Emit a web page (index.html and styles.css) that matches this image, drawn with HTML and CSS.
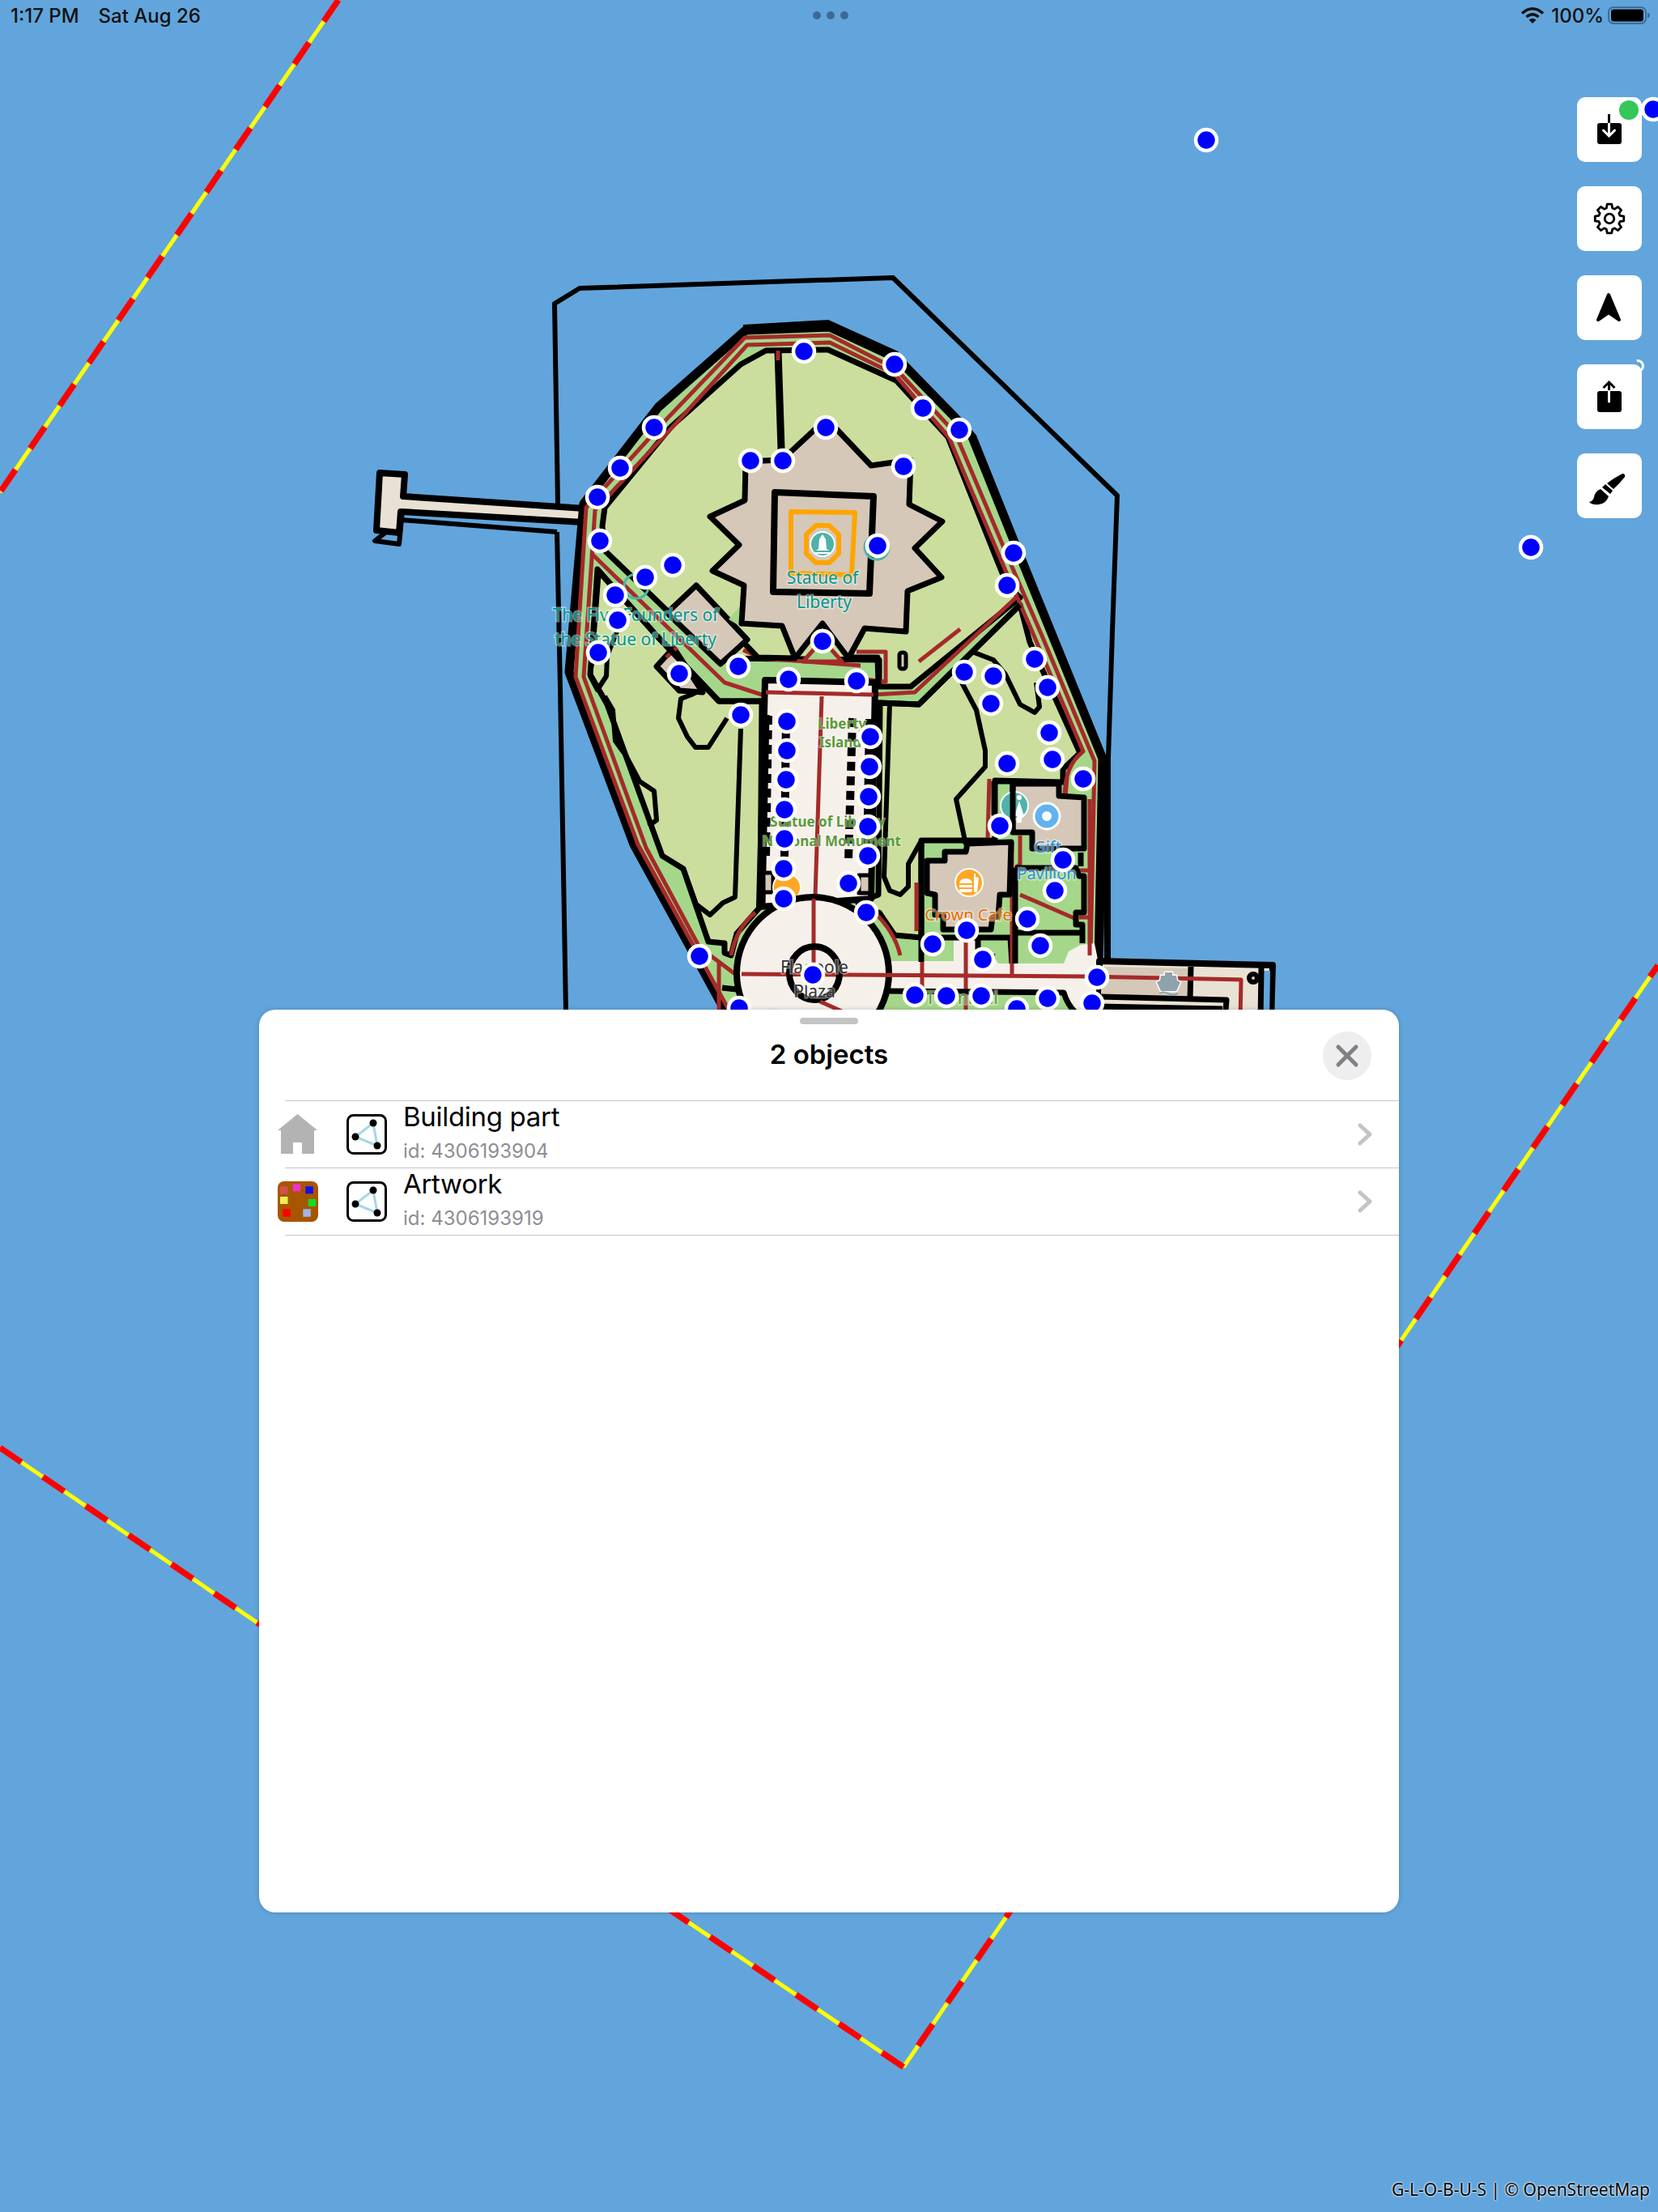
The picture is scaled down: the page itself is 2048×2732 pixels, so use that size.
FILE: index.html
```html
<!DOCTYPE html>
<html lang="en">
<head>
<meta charset="utf-8">
<title>Go Map</title>
<link rel="stylesheet" href="styles.css">
</head>
<body>
<main class="screen">
  <svg class="map" viewBox="0 0 2048 2732" xmlns="http://www.w3.org/2000/svg" aria-label="Map of Liberty Island">
    <!-- boundary lines -->
    <g>
      <path class="bnd-y" d="M0 608L418 0"/><path class="bnd-r" d="M418 0L0 608"/>
      <path class="bnd-y" d="M2048 1192L1116 2553"/>
      <path class="bnd-r bnd-off" d="M1116 2553L2048 1192"/>
      <path class="bnd-y" d="M1116 2553L700 2273"/>
      <path class="bnd-r" d="M1116 2553L700 2273"/>
      <path class="bnd-y" d="M0 1788L400 2060"/>
      <path class="bnd-r" d="M0 1788L400 2060"/>
    </g>
    <!-- fence -->
    <path class="fence" d="M689 622L685 375L716 356L1103 343L1380 612L1374 780L1369 936L1369 1186"/>
    <path class="fence" d="M688 657L692 850L699 1250"/>
    <path class="fence" d="M495 642L688 657"/>
    <path class="fence-thin" d="M918 403L1023 397L1109 436"/>
    <path class="fence-thin" d="M1363 945L1366 1186"/>
    <!-- west pier -->
    <path class="fence" d="M495 643L463 668L493 672L498 620"/>
    <path class="pier" d="M469 584L500 586L498 613L722 628L720 645L495 632L493 658L465 655Z"/>
    <!-- island base -->
    <path class="island" d="M921 408L1025 404L1109 443L1181 517L1201 540L1252 667L1298 780L1362 937L1357 1190L1357 1300L925 1300L895 1247L783 1043L703 830L721 622L813 503Z"/>
    <!-- lawns -->
    <path class="lawn" d="M946 433L1023 432L1107 470L1171 540L1232 693L1245 725L1260 738L1125 848L1086 848L1086 815L885 813L747 680L744 650L747 627L829 527L915 450Z"/>
    <path class="lawn" d="M1260 747L1272 793L1334 930L1313 950L1313 966L1229 964L1229 1038L1138 1038L1138 1158L1105 1155L1086 1127L1070 1127L1060 1115L1085 1105L1087 868L1135 870Z"/>
    <path class="lawn" d="M738 703L811 785L888 866L941 866L939 1120L910 1153L903 1180L895 1177L895 1165L875 1163L844 1073L818 1057L750 870L729 833L731 807Z"/>
    <!-- lawn paths -->
    <path class="path" d="M1099 868L1092 1083L1099 1100L1112 1105L1122 1095L1122 1067L1137 1040"/>
    <path class="path" d="M1188 843L1206 877L1217 927L1217 947L1181 987L1193 1043"/>
    <path class="path" d="M1201 805L1227 815L1242 833L1260 870L1278 880L1284 873L1280 843"/>
    <path class="path" d="M747 860L757 877L760 915L773 933L790 965L808 977L811 1013L801 1020"/>
    <path class="path" d="M818 1057L844 1073L860 1117L877 1130L893 1115L908 1108L915 900"/>
    <path class="path" d="M870 850L854 858L841 863L838 887L849 910L859 923L875 923L898 887"/>
    <path class="path" d="M740 703L732 807L729 835L738 852L749 835L750 810L770 760"/>
    <path class="path-wide" d="M961 433L965 555"/>
    <path class="road" d="M961 433L961 445"/>
    <path class="road" d="M1186 777L1135 817"/>
    <!-- roads in the ring -->
    <path class="road" d="M900 1247L788 1043L711 836L724 627L824 517L920 417L1025 414L1107 456L1180 535L1250 700L1287 785L1352 940L1347 1180"/>
    <path class="road" d="M864 1170L798 1047L721 836L735 630L833 525L923 426L1025 423L1105 462L1172 540L1240 700L1275 780L1338 928Q1315 945 1315 985"/>
    <path class="road" d="M730 683L895 843L941 858L1079 858L1130 855L1255 738"/>
    <path class="road" d="M864 1170L908 1203M888 1187L888 1250"/>
    <path class="road" d="M918 803L941 813L1063 822M1058 805L1094 805L1094 842L1060 838"/>
    <path class="road" d="M1333 1075L1346 1075M1333 1133L1346 1133"/>
    <!-- diamond -->
    <path class="bldg" d="M860 723L923 790L890 820L824 757Z"/>
    <path class="bldg" d="M811 823L832 800L868 855L839 853Z"/>
    <path class="road" d="M823 812L836 800"/>
    <!-- upper black edges of the band -->
    <path class="edge" d="M737 703L811 785L888 866L941 866"/>
    <path class="edge" d="M1084 868L1135 870L1260 747"/>
    <path class="edge" d="M918 793L936 812L982 813M1048 812L1084 812L1085 845"/>
    <rect class="pill" x="1111" y="806" width="8" height="20" rx="3"/>
    <path class="bandfill" d="M917 745L900 765L917 775Z"/>
    <path class="bandfill road-tri" d="M992 817L1016 790L1040 817Z"/>
    <!-- star -->
    <path class="bldg-w" d="M1021 517L1076 575L1125 568L1123 623L1164 644L1130 677L1163 713L1121 730L1119 780L1068 776L1048 813L1016 770L982 813L966 773L916 770L919 723L880 705L913 673L877 638L920 618L921 570L966 568Z"/>
    <path class="sq" d="M957 608L1079 613L1074 733L955 731Z"/>
    <path class="sq-o" d="M977 632L1056 633L1052 710L977 708Z"/>
    <path class="oct-o" d="M1008 649L1024 649L1036 660L1036 684L1024 695L1008 695L996 684L996 660Z"/>
    <circle class="poi-teal" cx="1016" cy="672" r="15"/>
    <path class="glyph-w" d="M1016 660L1020 666L1021 678L1024 680L1008 680L1011 678L1012 666ZM1007 682L1025 682L1025 684L1007 684Z"/>
    <circle class="poi-teal-ghost" cx="1083" cy="676" r="15"/>
    <circle class="poi-teal-ghost" cx="786" cy="724" r="15"/>
    <!-- avenue -->
    <path class="cream" d="M945 840L1081 843L1076 1110L938 1120Z"/>
    <path class="road" d="M946 855L1079 858M1015 860L1005 1168"/>
    <path class="thick" d="M946 883L941 1118"/>
    <path class="dots" d="M949 884L946 1060"/>
    <path class="dots" d="M971 885L969 1058"/>
    <path class="dots" d="M1053 887L1048 1062"/>
    <path class="dots" d="M1074 888L1071 1062"/>
    <rect class="tan-box" x="1061" y="1081" width="14" height="22"/>
    <rect class="tan-box" x="943" y="1078" width="12" height="24"/>
    <circle class="poi-orange" cx="972" cy="1096" r="17"/>
    <!-- east plaza -->
    <path class="red-wedge" d="M933 1127Q910 1145 903 1180M1078 1125Q1105 1150 1112 1180"/>
    <path class="cream-e" d="M1096 1187L1178 1187L1178 1160L1208 1160L1208 1172L1228 1182L1233 1190L1314 1190L1320 1175L1335 1167L1352 1165L1357 1190L1356 1250L1325 1250L1314 1226L1096 1223Z"/>
    <path class="edge" d="M1138 1158L1248 1158L1250 1190M1138 1040L1138 1188M1208 1160L1208 1172L1228 1182"/>
    <path class="road" d="M1139 1188L1139 1226M1193 1163L1193 1250M1250 1040L1250 1206M1222 962L1220 1035M1132 1090L1132 1150M1260 1032L1260 1067L1252 1075M1346 987L1346 1180M1318 960L1316 985"/>
    <path class="road" d="M1260 1105L1329 1135"/>
    <!-- gift and cafe -->
    <path class="bldg-w" d="M1251 968L1308 968L1308 983L1339 985L1339 1048L1275 1048L1275 1028L1251 1028Z"/>
    <path class="edge" d="M1228 965L1228 1007M1228 965L1251 965M1335 1053L1335 1070"/>
    <path class="lot" d="M1254 1072L1329 1072L1333 1082L1339 1082L1339 1127L1329 1127L1329 1142L1337 1142L1337 1165M1254 1072L1254 1190M1254 1152L1337 1152"/>
    <path class="bldg-w" d="M1195 1042L1249 1040L1247 1105L1235 1105L1233 1132L1226 1133L1224 1148L1165 1148L1165 1130L1155 1130L1155 1105L1145 1103L1145 1063L1167 1063L1167 1052L1193 1052Z"/>
    <circle class="poi-teal" cx="1253" cy="995" r="17"/>
    <circle class="poi-teal-dot" cx="1259" cy="985" r="3"/>
    <path class="glyph-w" d="M1259 989L1253 1008L1256 1008L1256 1016L1262 1016L1262 1008L1265 1008Z"/>
    <path class="edge" d="M1251 968L1251 1028"/>
    <circle class="poi-blue" cx="1293" cy="1008" r="16"/>
    <circle class="poi-dot" cx="1293" cy="1008" r="6"/>
    <circle class="poi-orange" cx="1197" cy="1090" r="17"/>
    <path class="glyph-w" d="M1185 1091Q1186 1085 1193 1085Q1200 1085 1201 1091ZM1185 1093L1201 1093L1201 1096L1185 1096ZM1185 1098L1201 1098Q1201 1102 1198 1102L1188 1102Q1185 1102 1185 1098ZM1203 1079L1205 1079L1205 1083L1209 1084L1207 1102L1203 1102Z"/>
    <!-- plaza -->
    <circle class="plaza" cx="1004" cy="1202" r="94"/>
    <path class="road" d="M916 1203L1340 1206M1005 1110L1005 1200"/>
    <ellipse class="ring" cx="1006" cy="1202" rx="31" ry="33"/>
    <path class="road" d="M1013 1237L1042 1250"/>
    <circle class="ghost" cx="954" cy="1256" r="12"/>
    <path class="edge" d="M892 1220L910 1222M1097 1224L1314 1226Q1318 1240 1328 1250"/>
    <!-- east pier -->
    <path class="pier-e" d="M1358 1187L1572 1192L1570 1260L1358 1260Z"/>
    <path class="pier-tan" d="M1360 1194L1470 1196L1470 1232L1360 1229Z"/>
    <path class="fill-water" d="M1358 1241L1510 1243L1510 1260L1358 1260ZM1560 1199L1569 1199L1568 1260L1558 1260Z"/>
    <path class="edge" d="M1471 1194L1470 1233M1558 1194L1557 1260M1358 1231L1515 1235L1513 1260M1358 1243L1510 1246"/>
    <path class="road" d="M1340 1206L1533 1210L1532 1260"/>
    <circle class="ring-s" cx="1548" cy="1208" r="5"/>
    <path class="ferry" d="M1439 1201L1448 1201L1448 1205L1453 1205L1454 1211L1458 1213L1453 1224L1434 1224L1429 1213L1433 1211L1434 1205L1439 1205Z"/>
    <path class="ferry-wave" d="M1432 1227Q1437 1224 1443 1227Q1449 1230 1455 1227"/>
    <!-- labels -->
    <g class="labels">
      <text class="lb lb-teal" x="1016" y="721">Statue of</text>
      <text class="lb lb-teal" x="1018" y="751">Liberty</text>
      <text class="lb lb-teal" x="785" y="767">The Five Founders of</text>
      <text class="lb lb-teal" x="785" y="797">the Statue of Liberty</text>
      <text class="lb lb-green" x="1040" y="900">Liberty</text>
      <text class="lb lb-green" x="1038" y="923">Island</text>
      <text class="lb lb-green" x="1022" y="1021">Statue of Liberty</text>
      <text class="lb lb-green" x="1027" y="1045">National Monument</text>
      <text class="lb lb-blue" x="1294" y="1053">Gift</text>
      <text class="lb lb-blue" x="1293" y="1086">Pavilion</text>
      <text class="lb lb-orange" x="1196" y="1137">Crown Cafe</text>
      <text class="lb lb-dark" x="1006" y="1202">Flagpole</text>
      <text class="lb lb-dark" x="1006" y="1232">Plaza</text>
      <text class="lb lb-term" x="1188" y="1240">Terminal</text>
    </g>
    <!-- nodes -->
    <g class="nodes">
      <circle cx="993" cy="434"/><circle cx="1105" cy="450"/><circle cx="1140" cy="504"/><circle cx="1185" cy="531"/>
      <circle cx="808" cy="528"/><circle cx="766" cy="578"/><circle cx="738" cy="614"/><circle cx="1020" cy="528"/>
      <circle cx="927" cy="569"/><circle cx="967" cy="569"/><circle cx="1116" cy="576"/><circle cx="741" cy="668"/>
      <circle cx="831" cy="698"/><circle cx="797" cy="713"/><circle cx="760" cy="735"/><circle cx="763" cy="766"/>
      <circle cx="739" cy="806"/><circle cx="1084" cy="674"/><circle cx="1252" cy="683"/><circle cx="1244" cy="723"/>
      <circle cx="1016" cy="792"/><circle cx="912" cy="823"/><circle cx="839" cy="832"/><circle cx="974" cy="839"/>
      <circle cx="1058" cy="841"/><circle cx="1191" cy="830"/><circle cx="1227" cy="835"/><circle cx="1224" cy="869"/>
      <circle cx="1278" cy="814"/><circle cx="1294" cy="849"/><circle cx="915" cy="883"/><circle cx="972" cy="891"/>
      <circle cx="1075" cy="910"/><circle cx="972" cy="927"/><circle cx="1074" cy="947"/><circle cx="971" cy="963"/>
      <circle cx="1073" cy="984"/><circle cx="969" cy="1000"/><circle cx="1072" cy="1021"/><circle cx="969" cy="1036"/>
      <circle cx="1072" cy="1057"/><circle cx="968" cy="1073"/><circle cx="1048" cy="1091"/><circle cx="968" cy="1110"/>
      <circle cx="1070" cy="1127"/><circle cx="1296" cy="905"/><circle cx="1300" cy="938"/><circle cx="1244" cy="943"/>
      <circle cx="1338" cy="962"/><circle cx="1235" cy="1020"/><circle cx="1313" cy="1062"/><circle cx="1303" cy="1100"/>
      <circle cx="1269" cy="1135"/><circle cx="1285" cy="1168"/><circle cx="1194" cy="1149"/><circle cx="1152" cy="1166"/>
      <circle cx="1214" cy="1185"/><circle cx="864" cy="1181"/><circle cx="1004" cy="1204"/><circle cx="1355" cy="1207"/>
      <circle cx="1130" cy="1229"/><circle cx="1169" cy="1230"/><circle cx="1212" cy="1230"/><circle cx="1294" cy="1233"/>
      <circle cx="1349" cy="1239"/><circle cx="913" cy="1245"/><circle cx="1256" cy="1246"/>
      <circle cx="1490" cy="173"/><circle cx="1891" cy="676"/><circle cx="2042" cy="135"/>
    </g>
  </svg>

  <header class="status">
    <div class="status-left"><span>1:17 PM</span><span>Sat Aug 26</span></div>
    <div class="status-dots"><i></i><i></i><i></i></div>
    <div class="status-right">
      <svg class="wifi" viewBox="0 0 30 22"><path d="M2 8.5Q15 -3 28 8.5" class="wifi-arc"/><path d="M7.5 13Q15 6.5 22.5 13" class="wifi-arc"/><path d="M15 21L10.5 16.5Q15 13 19.5 16.5Z" class="wifi-dot"/></svg>
      <span>100%</span>
      <svg class="battery" viewBox="0 0 52 22"><rect class="bat-shell" x="1" y="1" width="46" height="20" rx="6"/><rect class="bat-fill" x="4" y="3.5" width="40" height="15" rx="3.5"/><path class="bat-nub" d="M49 7.5Q52 8.5 52 11Q52 13.5 49 14.5Z"/></svg>
    </div>
  </header>

  <nav class="tools">
    <button class="tool">
      <svg viewBox="0 0 80 80"><rect class="ic-fill" x="25" y="32" width="30" height="26" rx="3"/><path class="ic-line" d="M39.5 21L39.5 33"/><path class="ic-inv" d="M39.5 33L39.5 47M32.5 41L39.5 48L46.5 41"/></svg>
      <span class="badge-green"></span>
    </button>
    <button class="tool">
      <svg viewBox="0 0 80 80"><g transform="translate(40 40)"><path class="ic-gear" d="M-3.72-12.98L-2.82-17.78L2.82-17.78L3.72-12.98L6.54-11.81L10.58-14.56L14.56-10.58L11.81-6.54L12.98-3.72L17.78-2.82L17.78 2.82L12.98 3.72L11.81 6.54L14.56 10.58L10.58 14.56L6.54 11.81L3.72 12.98L2.82 17.78L-2.82 17.78L-3.72 12.98L-6.54 11.81L-10.58 14.56L-14.56 10.58L-11.81 6.54L-12.98 3.72L-17.78 2.82L-17.78-2.82L-12.98-3.72L-11.81-6.54L-14.56-10.58L-10.58-14.56L-6.54-11.81Z"/><circle class="ic-gear" r="5.8"/></g></svg>
    </button>
    <button class="tool">
      <svg viewBox="0 0 80 80"><path class="ic-nav" d="M39 24L52 55L39 46L26 55Z"/></svg>
    </button>
    <button class="tool">
      <svg viewBox="0 0 80 80"><rect class="ic-fill" x="25" y="33" width="30" height="26" rx="3"/><path class="ic-line" d="M39.5 22L39.5 33M32.5 29L39.5 22L46.5 29"/><path class="ic-inv" d="M39.5 33L39.5 46"/></svg>
      <span class="badge-ring"></span>
    </button>
    <button class="tool">
      <svg viewBox="0 0 80 80"><path class="ic-solid" d="M56 25Q60 25 59 29Q52 38 45 44L37 37Q46 30 56 25Z"/><path class="ic-solid" d="M35 38L44 46L41 50L31 42Z"/><path class="ic-solid" d="M29 44L39 53Q36 62 27 63Q19 64 15 60Q20 59 21 54Q22 47 29 44Z"/></svg>
    </button>
  </nav>

  <section class="panel">
    <div class="grabber"></div>
    <div class="panel-head">
      <h1>2 objects</h1>
      <button class="close"><svg viewBox="0 0 60 60"><path d="M19 19L41 41M41 19L19 41"/></svg></button>
    </div>
    <div class="sep"></div>
    <div class="row">
      <svg class="ic-kind" viewBox="0 0 50 50"><path class="house" d="M24.500 0L49 20L45 20L45 49L30 49L30 35L19 35L19 49L4 49L4 20L0 20Z"/></svg>
      <svg class="ic-geom" viewBox="0 0 50 50"><rect class="geom-box" x="1.500" y="1.500" width="47" height="47" rx="7"/><path class="geom-line" d="M33 11L38 39L11 28Z"/><circle cx="33" cy="11" r="4.500"/><circle cx="38" cy="39" r="4.500"/><circle cx="11" cy="28" r="4.500"/></svg>
      <div class="row-text"><div class="row-title">Building part</div><div class="row-id">id: 4306193904</div></div>
      <svg class="chev" viewBox="0 0 18 28"><path d="M3 3L15 14L3 25"/></svg>
    </div>
    <div class="sep"></div>
    <div class="row">
      <svg class="ic-kind" viewBox="0 0 50 50"><rect class="art-bg" width="50" height="50" rx="8"/><rect class="a1" x="3" y="6.300" width="9.500" height="9.500"/><rect class="a2" x="18.700" y="3.300" width="9.500" height="9"/><rect class="a3" x="34.300" y="6.300" width="9.500" height="9"/><rect class="a4" x="3" y="19" width="9.500" height="9"/><rect class="a5" x="37.700" y="22" width="9.500" height="9"/><rect class="a6" x="6.300" y="34.300" width="9.500" height="9.500"/><rect class="a7" x="31.300" y="34.300" width="9.500" height="9.500"/></svg>
      <svg class="ic-geom" viewBox="0 0 50 50"><rect class="geom-box" x="1.500" y="1.500" width="47" height="47" rx="7"/><path class="geom-line" d="M33 11L38 39L11 28Z"/><circle cx="33" cy="11" r="4.500"/><circle cx="38" cy="39" r="4.500"/><circle cx="11" cy="28" r="4.500"/></svg>
      <div class="row-text"><div class="row-title">Artwork</div><div class="row-id">id: 4306193919</div></div>
      <svg class="chev" viewBox="0 0 18 28"><path d="M3 3L15 14L3 25"/></svg>
    </div>
    <div class="sep"></div>
  </section>

  <div class="attrib">G-L-O-B-U-S | © OpenStreetMap</div>
</main>
</body>
</html>
```
FILE: styles.css
```css
* { box-sizing: border-box; }
html, body { margin: 0; padding: 0; }
.screen { position: relative; width: 2048px; height: 2732px; overflow: hidden; background: #62a5dc; font-family: Inter, "Liberation Sans", sans-serif; }
.map { position: absolute; inset: 0; width: 2048px; height: 2732px; display: block; }

/* map strokes */
.map path, .map rect, .map circle, .map ellipse { stroke-linejoin: round; }
.bnd-y { fill: none; stroke: #ffff00; stroke-width: 5; }
.bnd-r { fill: none; stroke: #ff0000; stroke-width: 7.500; stroke-dasharray: 32 32; }
.bnd-off { stroke-dashoffset: 32; }
.fence { fill: none; stroke: #000; stroke-width: 6; }
.fence-thin { fill: none; stroke: #000; stroke-width: 4; }
.pier { fill: #e9e2d4; stroke: #000; stroke-width: 8; }
.island { fill: #a5d78a; stroke: #000; stroke-width: 11; }
.lawn { fill: #cbde9e; stroke: #000; stroke-width: 7; }
.path { fill: none; stroke: #000; stroke-width: 6; }
.path-wide { fill: none; stroke: #000; stroke-width: 9; }
.road { fill: none; stroke: #a52a2a; stroke-width: 5; }
.edge { fill: none; stroke: #000; stroke-width: 7; }
.bldg { fill: #d5c8b8; stroke: #000; stroke-width: 7; }
.bldg-w { fill: #d5c8b8; stroke: #000; stroke-width: 7; }
.pill { fill: #d5c8b8; stroke: #000; stroke-width: 5; }
.bandfill { fill: #a5d78a; }
.road-tri { stroke: #a52a2a; stroke-width: 5; }
.sq { fill: none; stroke: #000; stroke-width: 8; }
.sq-o { fill: none; stroke: #ffa500; stroke-width: 6; }
.oct-o { fill: #d5c8b8; stroke: #ffa500; stroke-width: 6; }
.poi-teal { fill: #4fb3a9; stroke: #fff; stroke-width: 2; }
.poi-teal-ghost { fill: none; stroke: #4fb3a9; stroke-width: 3; }
.poi-teal-dot { fill: #fff; }
.glyph-w { fill: #fff; }
.cream { fill: #f6f0ea; stroke: #000; stroke-width: 8; }
.cream-e { fill: #f6f0ea; stroke: none; }
.thick { fill: none; stroke: #000; stroke-width: 9; }
.dots { fill: none; stroke: #000; stroke-width: 10; stroke-dasharray: 11 7; }
.tan-box { fill: #d5c8b8; stroke: #000; stroke-width: 5; }
.poi-orange { fill: #ffa726; stroke: #fff; stroke-width: 2; }
.red-wedge { fill: none; stroke: #a52a2a; stroke-width: 5; }
.lot { fill: none; stroke: #000; stroke-width: 7; }
.poi-blue { fill: #62b2f0; stroke: #fff; stroke-width: 3; }
.poi-dot { fill: #fff; }
.plaza { fill: #f6f0ea; stroke: #000; stroke-width: 8; }
.ring { fill: none; stroke: #000; stroke-width: 8; }
.ghost { fill: #e8e8e8; }
.pier-e { fill: #e9e2d4; stroke: #000; stroke-width: 8; }
.pier-tan { fill: #d5c8b8; }
.fill-water { fill: #62a5dc; }
.ring-s { fill: #d5c8b8; stroke: #000; stroke-width: 6; }
.ferry { fill: #8fa3ad; stroke: #fff; stroke-width: 3; paint-order: stroke; }
.ferry-wave { fill: none; stroke: #8fa3ad; stroke-width: 2; }

/* labels */
.lb { font-family: "Noto Sans", sans-serif; font-size: 21px; text-anchor: middle; paint-order: stroke; stroke: rgba(255,255,255,.45); stroke-width: 3px; }
.lb-teal { fill: #00968f; }
.lb-green { fill: #5b9a3d; font-size: 17px; font-weight: 700; stroke-width: 2px; }
.lb-blue { fill: #2a8fd6; font-size: 20px; }
.lb-orange { fill: #ea6c00; font-size: 20px; }
.lb-dark { fill: #333; }
.lb-term { fill: #5b9a3d; font-size: 22px; }

/* nodes */
.nodes circle { r: 13px; fill: #0000ff; stroke: #fff; stroke-width: 4.500; }

/* status bar */
.status { position: absolute; top: 0; left: 0; right: 0; height: 40px; display: flex; align-items: center; justify-content: space-between; padding: 0 10px 2px 13px; color: #111; font-size: 24px; font-weight: 500; }
.status-left { display: flex; gap: 24px; width: 300px; }
.status-dots { display: flex; gap: 7px; }
.status-dots i { width: 10px; height: 10px; border-radius: 50%; background: #3c6a94; display: block; }
.status-right { display: flex; align-items: center; width: 300px; justify-content: flex-end; gap: 5px; }
.wifi { width: 30px; height: 22px; display: block; margin-right: 3px; }
.wifi-arc { fill: none; stroke: #111; stroke-width: 3.500; }
.wifi-dot { fill: #111; }
.battery { width: 52px; height: 22px; display: block; }
.bat-shell { fill: none; stroke: #3f6c94; stroke-width: 2; }
.bat-fill { fill: #000; }
.bat-nub { fill: #3f6c94; }

/* toolbar */
.tools { position: absolute; top: 120px; left: 1948px; display: flex; flex-direction: column; gap: 30px; }
.tool { position: relative; width: 80px; height: 80px; padding: 0; border: 0; border-radius: 10px; background: #fff; display: block; }
.tool svg { width: 80px; height: 80px; display: block; }
.ic-fill { fill: #000; }
.ic-solid { fill: #000; }
.ic-line { fill: none; stroke: #000; stroke-width: 3; }
.ic-inv { fill: none; stroke: #fff; stroke-width: 3; stroke-linecap: round; }
.ic-gear { fill: none; stroke: #000; stroke-width: 2.800; stroke-linejoin: round; }
.ic-nav { fill: #000; stroke: #000; stroke-width: 4; stroke-linejoin: round; }
.badge-green { position: absolute; top: 4px; right: 4px; width: 24px; height: 24px; border-radius: 50%; background: #34c759; }
.badge-ring { position: absolute; top: -6px; right: -3px; width: 16px; height: 16px; border-radius: 50%; border: 3px solid #fff; clip-path: polygon(40% 0, 100% 0, 100% 100%, 80% 100%, 50% 40%); }

/* panel */
.panel { position: absolute; left: 320px; top: 1247px; width: 1408px; height: 1115px; background: #fff; border-radius: 20px; box-shadow: 0 0 6px rgba(0,0,0,.18); }
.grabber { position: absolute; top: 10px; left: 668px; width: 72px; height: 8px; border-radius: 4px; background: #c4c4c4; }
.panel-head { height: 112px; display: flex; align-items: center; justify-content: center; position: relative; padding-bottom: 2px; }
.panel-head h1 { margin: 0; font-size: 33px; font-weight: 600; color: #000; }
.close { position: absolute; left: 1314px; top: 27px; width: 60px; height: 60px; padding: 0; border: 0; border-radius: 50%; background: #eeeeee; }
.close svg { width: 60px; height: 60px; display: block; }
.close path { fill: none; stroke: #808086; stroke-width: 5; stroke-linecap: round; }
.sep { height: 1px; margin-left: 32px; background: #c6c6c8; }
.row { height: 82px; display: flex; align-items: center; padding-left: 23px; }
.ic-kind { width: 50px; height: 50px; display: block; flex: none; }
.ic-geom { width: 50px; height: 50px; display: block; flex: none; margin-left: 35px; }
.house { fill: #b3b3b3; }
.art-bg { fill: #a85500; }
.a1 { fill: #d0504f; } .a2 { fill: #ee33cc; } .a3 { fill: #1010ee; } .a4 { fill: #eeee55; } .a5 { fill: #11dd22; } .a6 { fill: #ff0000; } .a7 { fill: #a0b4ee; }
.geom-box { fill: #fff; stroke: #000; stroke-width: 3; }
.geom-line { fill: none; stroke: #a5d8e4; stroke-width: 3; }
.ic-geom circle { fill: #000; }
.row-text { flex: 1; margin-left: 20px; padding-bottom: 5px; }
.row-title { font-size: 33px; line-height: 38px; color: #000; letter-spacing: -0.3px; }
.row-id { font-size: 24px; line-height: 30px; color: #8e8e93; margin-top: 9px; }
.chev { width: 18px; height: 28px; margin-right: 33px; flex: none; }
.chev path { fill: none; stroke: #c4c4c7; stroke-width: 5; stroke-linecap: round; stroke-linejoin: round; }

.attrib { position: absolute; right: 10px; top: 2690px; font-family: "Noto Sans", sans-serif; font-size: 21px; line-height: 28px; color: #000; text-shadow: 0 0 3px #fff, 0 0 2px #fff; }
```
